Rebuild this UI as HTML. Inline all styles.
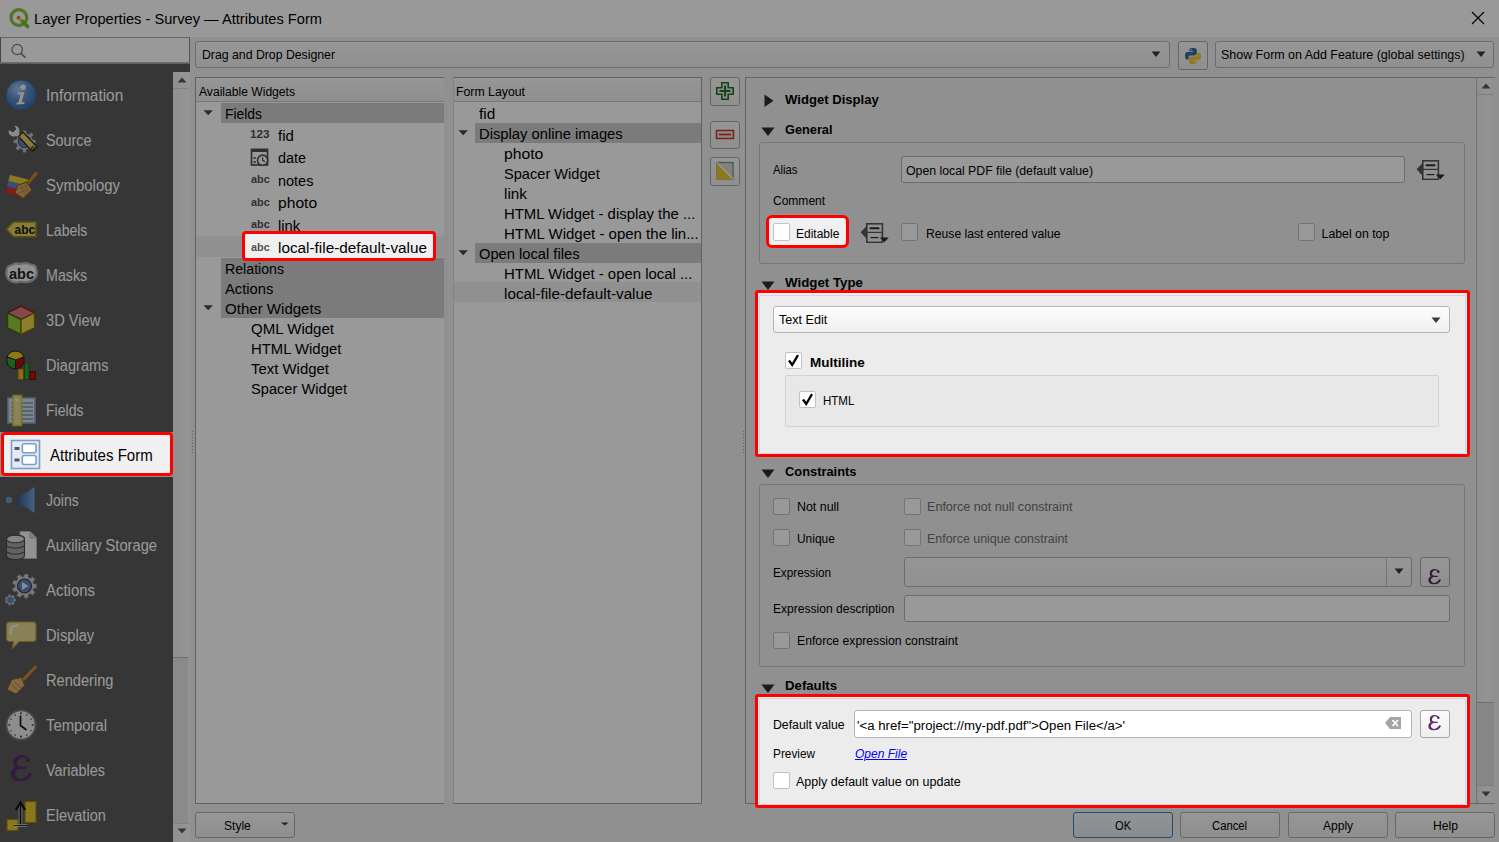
<!DOCTYPE html><html><head><meta charset="utf-8"><title>Layer Properties</title><style>
html,body{margin:0;padding:0;}
body{width:1499px;height:842px;overflow:hidden;position:relative;background:#f0f0f0;font-family:"Liberation Sans",sans-serif;}
.b{position:absolute;box-sizing:border-box;display:block;}
.t{position:absolute;white-space:pre;line-height:1;}
#ov{position:absolute;left:0;top:0;width:1499px;height:842px;background:rgba(0,0,0,0.4);z-index:50;}
</style></head><body>
<div class="b" style="left:0px;top:0px;width:1499px;height:37px;background:#fff;"></div>
<svg class="b" style="left:8px;top:7px;" width="22" height="22" viewBox="0 0 22 22"><circle cx="10.9" cy="10.6" r="7.9" fill="none" stroke="#8cc040" stroke-width="3.3"/><path d="M13.6 13.6 L19.6 19.6" stroke="#7ab83a" stroke-width="3.6" stroke-linecap="round"/><circle cx="10.6" cy="10.8" r="2" fill="#f07a20"/><path d="M11.5 11.8 L14 14.2" stroke="#f0d060" stroke-width="1.6"/></svg>
<div class="t" style="left:34.00px;top:12.00px;font-size:14.8px;color:#000;font-weight:400;transform:scaleX(0.9893);transform-origin:0 0;">Layer Properties - Survey — Attributes Form</div>
<svg class="b" style="left:1471px;top:11px;" width="14" height="14" viewBox="0 0 14 14"><path d="M1 1 L13 13 M13 1 L1 13" stroke="#000" stroke-width="1.1"/></svg>
<div class="b" style="left:0px;top:37px;width:190px;height:27px;background:#fff;border:1px solid #a8a8a8;border-left-color:#707070;border-right-color:#8a8a8a;"></div>
<div class="b" style="left:0px;top:62px;width:190px;height:2px;background:linear-gradient(#c8c8c8,#8c8c8c);"></div>
<svg class="b" style="left:9px;top:41px;" width="20" height="20" viewBox="0 0 20 20"><circle cx="8.2" cy="8.5" r="5.2" fill="none" stroke="#777" stroke-width="1.25"/><path d="M11.9 12.2 L16.4 16.6" stroke="#777" stroke-width="1.6"/></svg>
<div class="b" style="left:0px;top:64px;width:190px;height:778px;background:#5a5a5a;"></div>
<div class="b" style="left:173px;top:72px;width:17px;height:770px;background:linear-gradient(90deg,#f0f0f0,#f6f6f6 60%,#fafafa);"></div>
<svg class="b" style="left:176px;top:76px;" width="12" height="8" viewBox="0 0 12 8"><path d="M1.5 6.5 L6 1.5 L10.5 6.5 Z" fill="#5a5a5a"/></svg>
<div class="b" style="left:173px;top:88px;width:16px;height:1px;background:#d8d8d8;"></div>
<div class="b" style="left:173px;top:657px;width:16px;height:167px;background:#e6e6e6;border-top:1px solid #b8b8b8;border-bottom:1px solid #d8d8d8;border-right:1px solid #f4f4f4;"></div>
<svg class="b" style="left:176px;top:827px;" width="12" height="8" viewBox="0 0 12 8"><path d="M1.5 1.5 L6 6.5 L10.5 1.5 Z" fill="#5a5a5a"/></svg>
<svg class="b" style="left:5px;top:79px;" width="33" height="33" viewBox="0 0 33 33"><defs><radialGradient id="gi" cx="0.4" cy="0.3" r="0.75"><stop offset="0" stop-color="#a8c8f0"/><stop offset="0.5" stop-color="#5a8ac8"/><stop offset="1" stop-color="#3a6aa8"/></radialGradient></defs><circle cx="16" cy="16" r="15" fill="url(#gi)" stroke="#3a68a0" stroke-width="1"/><circle cx="18" cy="8.3" r="2.7" fill="#f2f2f2"/><path d="M12.8 13.6 L19.4 13 L16.8 23.2 L19.6 23 L19.2 25 L11.3 25.4 L11.8 23.4 L13.6 23.3 L15.4 15.5 L12.6 15.6 Z" fill="#f2f2f2"/></svg>
<div class="t" style="left:46.00px;top:88.00px;font-size:15.6px;color:#ffffff;font-weight:400;transform:scaleX(0.9908);transform-origin:0 0;">Information</div>
<svg class="b" style="left:5px;top:124px;" width="33" height="33" viewBox="0 0 33 33"><path d="M27.80 15.65 L30.85 15.67 L30.85 19.33 L27.80 19.35 L26.68 22.05 L28.82 24.23 L26.23 26.82 L24.05 24.68 L21.35 25.80 L21.33 28.85 L17.67 28.85 L17.65 25.80 L14.95 24.68 L12.77 26.82 L10.18 24.23 L12.32 22.05 L11.20 19.35 L8.15 19.33 L8.15 15.67 L11.20 15.65 L12.32 12.95 L10.18 10.77 L12.77 8.18 L14.95 10.32 L17.65 9.20 L17.67 6.15 L21.33 6.15 L21.35 9.20 L24.05 10.32 L26.23 8.18 L28.82 10.77 L26.68 12.95 Z" fill="#c4c4c4" stroke="#6a6a6a" stroke-width="1"/><circle cx="19.5" cy="17.5" r="6.2" fill="#5a86c0" stroke="#444" stroke-width="1"/><path d="M3 7.5 A6 6 0 0 0 11.5 12.5 L15 16 L18 13 L14.5 9.5 A6 6 0 0 0 8.5 1 L11 5 L8 8 L3.8 5.6 Z" fill="#e6e6e6" stroke="#555" stroke-width="0.9"/><path d="M13.5 12.5 L27.5 27.5 L32 23 L18 8 Z" fill="#e2ca6a" stroke="#2a2a10" stroke-width="1.2"/><circle cx="28" cy="24" r="1.4" fill="none" stroke="#2a2a10" stroke-width="1"/></svg>
<div class="t" style="left:46.00px;top:133.00px;font-size:15.6px;color:#ffffff;font-weight:400;transform:scaleX(0.9186);transform-origin:0 0;">Source</div>
<svg class="b" style="left:5px;top:169px;" width="33" height="33" viewBox="0 0 33 33"><path d="M5 6 L23 10.5 L17.5 29 L0.5 23.5 Z" fill="#d43030"/><path d="M5 6 L23 10.5 L19.5 22 L1.8 17 Z" fill="#5a86c8"/><path d="M5 6 L23 10.5 L21.2 16.5 L3.5 11.8 Z" fill="#e8cc30"/><path d="M31 4.5 L21.5 16" stroke="#c8862a" stroke-width="3.2" stroke-linecap="round"/><path d="M12.5 16.5 L21.5 13 L27 21 L18.5 29.5 L10 24 Z" fill="#d8aa6a" stroke="#8a5a20" stroke-width="1.1"/><path d="M12 20.5 L22.5 16.5 M13.5 24 L24.5 19.5 M16 16 L20.5 27.5 M19.5 14.5 L23.5 25" stroke="#a8783a" stroke-width="0.8"/></svg>
<div class="t" style="left:46.00px;top:178.00px;font-size:15.6px;color:#ffffff;font-weight:400;transform:scaleX(0.9593);transform-origin:0 0;">Symbology</div>
<svg class="b" style="left:5px;top:214px;" width="33" height="33" viewBox="0 0 33 33"><path d="M1.5 15.3 L8.5 8 L31 8 L31 22.8 L8.5 22.8 Z" fill="#e2d060" stroke="#9a8418" stroke-width="1.6"/><text x="19.8" y="19.8" font-family="Liberation Sans" font-weight="700" font-size="12" text-anchor="middle" fill="#161616">abc</text></svg>
<div class="t" style="left:46.00px;top:223.00px;font-size:15.6px;color:#ffffff;font-weight:400;transform:scaleX(0.9009);transform-origin:0 0;">Labels</div>
<svg class="b" style="left:5px;top:259px;" width="33" height="33" viewBox="0 0 33 33"><path d="M7 6 Q10 3.5 15 5 Q21 3 25.5 5.5 Q31.5 5.5 31.5 11.5 Q33 18 28 21 Q23 24.5 16 22.5 Q9 24.5 5 21.5 Q0.5 18.5 1.5 12.5 Q1.5 6.5 7 6 Z" fill="#f2f2f2" stroke="#b4b4b4" stroke-width="2.2"/><text x="16.5" y="19.5" font-family="Liberation Sans" font-weight="700" font-size="14.5" text-anchor="middle" fill="#222">abc</text></svg>
<div class="t" style="left:46.00px;top:268.00px;font-size:15.6px;color:#ffffff;font-weight:400;transform:scaleX(0.9143);transform-origin:0 0;">Masks</div>
<svg class="b" style="left:5px;top:304px;" width="33" height="33" viewBox="0 0 33 33"><path d="M16 2 L29.5 8.8 L16 15.5 L2.5 8.8 Z" fill="#e07878" stroke="#8a1f1f" stroke-width="1.4"/><path d="M2.5 8.8 L16 15.5 L16 30.5 L2.5 23.8 Z" fill="#96c83a" stroke="#3f6a10" stroke-width="1.4"/><path d="M29.5 8.8 L16 15.5 L16 30.5 L29.5 23.8 Z" fill="#e8d24a" stroke="#7a6a10" stroke-width="1.4"/></svg>
<div class="t" style="left:46.00px;top:313.00px;font-size:15.6px;color:#ffffff;font-weight:400;transform:scaleX(0.9378);transform-origin:0 0;">3D View</div>
<svg class="b" style="left:5px;top:349px;" width="33" height="33" viewBox="0 0 33 33"><circle cx="10.5" cy="11" r="8.8" fill="#b01010" stroke="#222" stroke-width="1"/><path d="M10.5 11 L2.2 8 A8.8 8.8 0 0 1 18.8 8 Z" fill="#f0c820" stroke="#222" stroke-width="1"/><path d="M10.5 11 L2.2 8 A8.8 8.8 0 0 0 10.5 19.8 Z" fill="#30a030" stroke="#222" stroke-width="1"/><rect x="13" y="20" width="5.5" height="10.5" fill="#f0b020" stroke="#8a6010" stroke-width="0.8"/><rect x="19.5" y="14" width="4.5" height="16.5" fill="#30a030" stroke="#1a5a1a" stroke-width="0.8"/><rect x="25" y="22.5" width="5.5" height="8" fill="#c01010" stroke="#5a0a0a" stroke-width="0.8"/></svg>
<div class="t" style="left:46.00px;top:358.00px;font-size:15.6px;color:#ffffff;font-weight:400;transform:scaleX(0.9365);transform-origin:0 0;">Diagrams</div>
<svg class="b" style="left:5px;top:394px;" width="33" height="33" viewBox="0 0 33 33"><rect x="3" y="4" width="27" height="25" fill="#cfdcec" stroke="#8aa4c4" stroke-width="1.6"/><path d="M6 9 H28 M6 13 H28 M6 17 H28 M6 21 H28 M6 25 H28" stroke="#7a94b4" stroke-width="1.3"/><rect x="8" y="1.5" width="8.5" height="30" fill="#e6dc96" stroke="#d0c040" stroke-width="1.6"/><rect x="10.5" y="5" width="2" height="2" fill="#fff"/></svg>
<div class="t" style="left:46.00px;top:403.00px;font-size:15.6px;color:#ffffff;font-weight:400;transform:scaleX(0.9036);transform-origin:0 0;">Fields</div>
<svg class="b" style="left:5px;top:484px;" width="33" height="33" viewBox="0 0 33 33"><circle cx="4" cy="16" r="3.2" fill="#6a9ac8"/><defs><linearGradient id="gj" x1="0" x2="1"><stop offset="0" stop-color="#2a5088"/><stop offset="1" stop-color="#7aa4d8"/></linearGradient></defs><path d="M9.5 16 L29.5 3 L29.5 29 Z" fill="url(#gj)"/></svg>
<div class="t" style="left:46.00px;top:493.00px;font-size:15.6px;color:#ffffff;font-weight:400;transform:scaleX(0.8982);transform-origin:0 0;">Joins</div>
<svg class="b" style="left:5px;top:529px;" width="33" height="33" viewBox="0 0 33 33"><path d="M15 2.5 L25 2.5 L31.5 9 L31.5 29.5 L15 29.5 Z" fill="#f4f4f4" stroke="#b4b4b4" stroke-width="1"/><path d="M25 2.5 L25 9 L31.5 9" fill="#d8d8d8" stroke="#b4b4b4" stroke-width="1"/><path d="M1.5 10 Q1.5 6 10.5 6 Q19.5 6 19.5 10 L19.5 26.5 Q19.5 30.5 10.5 30.5 Q1.5 30.5 1.5 26.5 Z" fill="#a4a4a4" stroke="#4a4a4a" stroke-width="1.1"/><ellipse cx="10.5" cy="10" rx="9" ry="3.8" fill="#dcdcdc" stroke="#4a4a4a" stroke-width="1.1"/><path d="M1.5 17 Q10.5 21.5 19.5 17 M1.5 23 Q10.5 27.5 19.5 23" fill="none" stroke="#4a4a4a" stroke-width="1.1"/></svg>
<div class="t" style="left:46.00px;top:538.00px;font-size:15.6px;color:#ffffff;font-weight:400;transform:scaleX(0.9417);transform-origin:0 0;">Auxiliary Storage</div>
<svg class="b" style="left:5px;top:574px;" width="33" height="33" viewBox="0 0 33 33"><path d="M28.68 9.54 L31.85 10.04 L31.85 13.96 L28.68 14.46 L28.11 16.01 L30.21 18.44 L27.70 21.43 L24.95 19.78 L23.51 20.61 L23.57 23.82 L19.72 24.50 L18.67 21.46 L17.04 21.18 L15.02 23.67 L11.63 21.71 L12.78 18.72 L11.72 17.45 L8.57 18.06 L7.23 14.39 L10.04 12.83 L10.04 11.17 L7.23 9.61 L8.57 5.94 L11.72 6.55 L12.78 5.28 L11.63 2.29 L15.02 0.33 L17.04 2.82 L18.67 2.54 L19.72 -0.50 L23.57 0.18 L23.51 3.39 L24.95 4.22 L27.70 2.57 L30.21 5.56 L28.11 7.99 Z" fill="#c8c8c8" stroke="#707070" stroke-width="0.8"/><circle cx="19.5" cy="12" r="7" fill="#5a86c0" stroke="#3a3a3a" stroke-width="1.1"/><path d="M17 8 L23.5 12 L17 16 Z" fill="#e8e8e8"/><path d="M9.46 24.61 L10.99 24.88 L10.99 27.12 L9.46 27.39 L9.06 28.23 L9.80 29.59 L8.04 30.99 L6.89 29.96 L5.97 30.17 L5.37 31.60 L3.18 31.10 L3.27 29.56 L2.53 28.97 L1.04 29.39 L0.07 27.37 L1.33 26.47 L1.33 25.53 L0.07 24.63 L1.04 22.61 L2.53 23.03 L3.27 22.44 L3.18 20.90 L5.37 20.40 L5.97 21.83 L6.89 22.04 L8.04 21.01 L9.80 22.41 L9.06 23.77 Z" fill="#c8c8c8" stroke="#707070" stroke-width="0.6"/><circle cx="5.5" cy="26" r="3.3" fill="#5a86c0"/></svg>
<div class="t" style="left:46.00px;top:583.00px;font-size:15.6px;color:#ffffff;font-weight:400;transform:scaleX(0.9581);transform-origin:0 0;">Actions</div>
<svg class="b" style="left:5px;top:619px;" width="33" height="33" viewBox="0 0 33 33"><path d="M5 3 L28 3 Q31 3 31 6.5 L31 19 Q31 22.5 28 22.5 L14 22.5 L7.5 29.5 L8.5 22.5 L5 22.5 Q1.5 22.5 1.5 19 L1.5 6.5 Q1.5 3 5 3 Z" fill="#e4d890" stroke="#aa9c44" stroke-width="1.2"/><path d="M5.5 14 Q5.5 6.5 12.5 6.5" stroke="#faf6dc" stroke-width="2.2" fill="none" stroke-linecap="round"/></svg>
<div class="t" style="left:46.00px;top:628.00px;font-size:15.6px;color:#ffffff;font-weight:400;transform:scaleX(0.9425);transform-origin:0 0;">Display</div>
<svg class="b" style="left:5px;top:664px;" width="33" height="33" viewBox="0 0 33 33"><path d="M30.5 3 L17 17" stroke="#d08a30" stroke-width="3.2" stroke-linecap="round"/><path d="M7 15.5 L16.5 13.5 L19.5 21.5 L11 30 L2 25.5 Z" fill="#deb070" stroke="#8a5a20" stroke-width="1"/><path d="M6 20 L14 27.5 M9 17.5 L16.5 24.5" stroke="#a0703a" stroke-width="0.9"/></svg>
<div class="t" style="left:46.00px;top:673.00px;font-size:15.6px;color:#ffffff;font-weight:400;transform:scaleX(0.9379);transform-origin:0 0;">Rendering</div>
<svg class="b" style="left:5px;top:709px;" width="33" height="33" viewBox="0 0 33 33"><circle cx="16" cy="16" r="14.6" fill="#ececec" stroke="#7a7a7a" stroke-width="1.9"/><g fill="#3a5a8a"><circle cx="16" cy="4.3" r="1.1"/><circle cx="16" cy="27.7" r="1.1"/><circle cx="4.3" cy="16" r="1.1"/><circle cx="27.7" cy="16" r="1.1"/><circle cx="21.8" cy="5.9" r="0.8"/><circle cx="26.1" cy="10.2" r="0.8"/><circle cx="26.1" cy="21.8" r="0.8"/><circle cx="21.8" cy="26.1" r="0.8"/><circle cx="10.2" cy="26.1" r="0.8"/><circle cx="5.9" cy="21.8" r="0.8"/><circle cx="5.9" cy="10.2" r="0.8"/><circle cx="10.2" cy="5.9" r="0.8"/></g><path d="M15.5 6.5 L15.5 16.5 L21.5 21" stroke="#1a1a1a" stroke-width="1.7" fill="none"/></svg>
<div class="t" style="left:46.00px;top:718.00px;font-size:15.6px;color:#ffffff;font-weight:400;transform:scaleX(0.9510);transform-origin:0 0;">Temporal</div>
<svg class="b" style="left:4.7px;top:750.2px;" width="35" height="35" viewBox="0 0 35 35"><g transform="scale(1.7)"><g fill="none" stroke="#5a2a6a" stroke-linecap="round"><path d="M13.6 6 C12.8 4.2 11 3.6 9.5 3.7 C7 3.9 5.3 5.6 5.4 7.6 C5.5 9.3 6.8 10.3 8.5 10.4" stroke-width="1.25"/><path d="M7.8 4.5 C5.9 5.6 5.4 8.2 6.9 9.6" stroke-width="1.8"/><path d="M8 10.4 L12.3 10.4" stroke-width="1.15"/><path d="M8.5 10.4 C5.8 10.7 3.9 12.4 4 14.5 C4.1 16.6 6.3 17.7 9 17.7 C11.5 17.7 13.4 16.4 14.7 14.4" stroke-width="1.25"/><path d="M6.6 11.1 C4.3 12.3 4 15.8 6.8 17" stroke-width="2.0"/><path d="M12.4 16.7 C13.4 16 14.2 15.2 14.8 14.3" stroke-width="1.9"/></g><circle cx="13.3" cy="5.8" r="1.25" fill="#5a2a6a"/></g></svg>
<div class="t" style="left:46.00px;top:763.00px;font-size:15.6px;color:#ffffff;font-weight:400;transform:scaleX(0.9239);transform-origin:0 0;">Variables</div>
<svg class="b" style="left:5px;top:799px;" width="33" height="33" viewBox="0 0 33 33"><rect x="20" y="2.5" width="11" height="21" fill="#e6c830" stroke="#9a8010" stroke-width="1.2"/><rect x="2" y="20.5" width="11" height="11" fill="#e6c830" stroke="#9a8010" stroke-width="1.2"/><path d="M9 26.5 L22 26.5" stroke="#ddd" stroke-width="2.4"/><path d="M8.5 26.5 L22 26.5" stroke="#1a1a1a" stroke-width="0.9"/><path d="M15.5 25 L15.5 6" stroke="#ccc" stroke-width="3.6"/><path d="M15.5 25 L15.5 6" stroke="#111" stroke-width="1.8"/><path d="M10.8 11 L15.5 3.5 L20.2 11" stroke="#111" stroke-width="2.2" fill="none"/></svg>
<div class="t" style="left:46.00px;top:808.00px;font-size:15.6px;color:#ffffff;font-weight:400;transform:scaleX(0.9321);transform-origin:0 0;">Elevation</div>
<div class="b" style="left:0px;top:432px;width:173px;height:45px;background:#f0f0f0;"></div>
<div class="b" style="left:195px;top:41px;width:975px;height:27px;background:linear-gradient(#fbfbfb,#f0f0f0);border:1px solid #b4b4b4;border-radius:3px;"></div>
<div class="t" style="left:201.60px;top:49.00px;font-size:12.3px;color:#000;font-weight:400;transform:scaleX(0.9978);transform-origin:0 0;">Drag and Drop Designer</div>
<svg class="b" style="left:1151px;top:51px;" width="10" height="7" viewBox="0 0 10 7"><path d="M0.5 0.5 L9.5 0.5 L5 6 Z" fill="#3a3a3a"/></svg>
<div class="b" style="left:1178px;top:41px;width:30px;height:29px;background:linear-gradient(#fbfbfb,#eeeeee);border:1px solid #a8a8a8;border-radius:3px;"></div>
<svg class="b" style="left:1183px;top:46px;" width="20" height="20" viewBox="0 0 20 20"><path d="M9.8 2 C6 2 6.2 3.6 6.2 3.6 L6.2 5.3 L10 5.3 L10 5.9 L4.6 5.9 C4.6 5.9 2 5.6 2 9.7 C2 13.8 4.3 13.6 4.3 13.6 L5.6 13.6 L5.6 11.7 C5.6 11.7 5.5 9.4 7.8 9.4 L11.6 9.4 C11.6 9.4 13.8 9.5 13.8 7.3 L13.8 3.8 C13.8 3.8 14.1 2 9.8 2 Z" fill="#3a6ea5"/><path d="M10.2 18 C14 18 13.8 16.4 13.8 16.4 L13.8 14.7 L10 14.7 L10 14.1 L15.4 14.1 C15.4 14.1 18 14.4 18 10.3 C18 6.2 15.7 6.4 15.7 6.4 L14.4 6.4 L14.4 8.3 C14.4 8.3 14.5 10.6 12.2 10.6 L8.4 10.6 C8.4 10.6 6.2 10.5 6.2 12.7 L6.2 16.2 C6.2 16.2 5.9 18 10.2 18 Z" fill="#f2c83a"/><circle cx="8" cy="3.7" r="0.7" fill="#fff"/><circle cx="12" cy="16.3" r="0.7" fill="#fff"/></svg>
<div class="b" style="left:1215px;top:41px;width:279px;height:27px;background:linear-gradient(#fbfbfb,#f0f0f0);border:1px solid #b4b4b4;border-radius:3px;"></div>
<div class="t" style="left:1221.10px;top:49.00px;font-size:12.3px;color:#000;font-weight:400;transform:scaleX(1.0125);transform-origin:0 0;">Show Form on Add Feature (global settings)</div>
<svg class="b" style="left:1476px;top:51px;" width="10" height="7" viewBox="0 0 10 7"><path d="M0.5 0.5 L9.5 0.5 L5 6 Z" fill="#3a3a3a"/></svg>
<div class="b" style="left:195px;top:77px;width:249px;height:727px;background:#fff;border:1px solid #a4a4a4;border-right:none;"></div>
<div class="b" style="left:196px;top:78px;width:248px;height:24px;background:linear-gradient(#fafafa,#eeeeee);border-bottom:1px solid #c8c8c8;"></div>
<div class="t" style="left:199.00px;top:86.00px;font-size:12.3px;color:#000;font-weight:400;transform:scaleX(0.9843);transform-origin:0 0;">Available Widgets</div>
<div class="b" style="left:221px;top:103px;width:223px;height:20px;background:#cdcdcd;"></div>
<svg class="b" style="left:203.3px;top:110px;" width="11" height="6" viewBox="0 0 11 6"><path d="M0.5 0.3 L9.9 0.3 L5.2 5.3 Z" fill="#4a4a4a"/></svg>
<div class="t" style="left:225.00px;top:107.00px;font-size:14.9px;color:#000;font-weight:400;transform:scaleX(0.9312);transform-origin:0 0;">Fields</div>
<div class="t" style="left:250.30px;top:129.00px;font-size:10.6px;color:#505050;font-weight:700;transform:scaleX(1.1081);transform-origin:0 0;">123</div>
<div class="t" style="left:278.20px;top:129.00px;font-size:14.9px;color:#000;font-weight:400;transform:scaleX(1.0042);transform-origin:0 0;">fid</div>
<svg class="b" style="left:250px;top:147px;" width="20" height="20" viewBox="0 0 20 20"><rect x="1.5" y="2.5" width="16" height="15.5" fill="none" stroke="#505050" stroke-width="1.7"/><rect x="1.5" y="1.8" width="16" height="3.2" fill="#505050"/><circle cx="12.6" cy="13.2" r="5.1" fill="#fff" stroke="#505050" stroke-width="1.6"/><path d="M12.6 10.2 L12.6 13.3 L15 14.6" stroke="#505050" stroke-width="1.2" fill="none"/><rect x="3.6" y="10" width="2" height="2" fill="#505050"/><rect x="3.6" y="14" width="2" height="2" fill="#505050"/></svg>
<div class="t" style="left:278.20px;top:151.00px;font-size:14.9px;color:#000;font-weight:400;transform:scaleX(0.9660);transform-origin:0 0;">date</div>
<div class="t" style="left:250.80px;top:174.00px;font-size:10.6px;color:#505050;font-weight:700;transform:scaleX(1.0238);transform-origin:0 0;">abc</div>
<div class="t" style="left:278.20px;top:174.00px;font-size:14.9px;color:#000;font-weight:400;transform:scaleX(0.9715);transform-origin:0 0;">notes</div>
<div class="t" style="left:250.80px;top:197.00px;font-size:10.6px;color:#505050;font-weight:700;transform:scaleX(1.0238);transform-origin:0 0;">abc</div>
<div class="t" style="left:278.20px;top:196.00px;font-size:14.9px;color:#000;font-weight:400;transform:scaleX(1.0492);transform-origin:0 0;">photo</div>
<div class="t" style="left:250.80px;top:219.00px;font-size:10.6px;color:#505050;font-weight:700;transform:scaleX(1.0238);transform-origin:0 0;">abc</div>
<div class="t" style="left:278.20px;top:219.00px;font-size:14.9px;color:#000;font-weight:400;transform:scaleX(0.9980);transform-origin:0 0;">link</div>
<div class="b" style="left:196px;top:236px;width:248px;height:21px;background:#f0f0f0;"></div>
<div class="b" style="left:221px;top:258px;width:223px;height:60px;background:#cdcdcd;"></div>
<div class="t" style="left:225.00px;top:262.00px;font-size:14.9px;color:#000;font-weight:400;transform:scaleX(0.9518);transform-origin:0 0;">Relations</div>
<div class="t" style="left:225.00px;top:282.00px;font-size:14.9px;color:#000;font-weight:400;transform:scaleX(0.9889);transform-origin:0 0;">Actions</div>
<svg class="b" style="left:203.3px;top:305px;" width="11" height="6" viewBox="0 0 11 6"><path d="M0.5 0.3 L9.9 0.3 L5.2 5.3 Z" fill="#4a4a4a"/></svg>
<div class="t" style="left:225.00px;top:302.00px;font-size:14.9px;color:#000;font-weight:400;transform:scaleX(1.0108);transform-origin:0 0;">Other Widgets</div>
<div class="t" style="left:250.50px;top:322.00px;font-size:14.9px;color:#000;font-weight:400;transform:scaleX(1.0097);transform-origin:0 0;">QML Widget</div>
<div class="t" style="left:250.50px;top:342.00px;font-size:14.9px;color:#000;font-weight:400;transform:scaleX(0.9981);transform-origin:0 0;">HTML Widget</div>
<div class="t" style="left:250.50px;top:362.00px;font-size:14.9px;color:#000;font-weight:400;transform:scaleX(1.0026);transform-origin:0 0;">Text Widget</div>
<div class="t" style="left:250.50px;top:382.00px;font-size:14.9px;color:#000;font-weight:400;transform:scaleX(0.9829);transform-origin:0 0;">Spacer Widget</div>
<div class="b" style="left:192px;top:431px;width:1px;height:1px;background:#a8a8a8;"></div>
<div class="b" style="left:192px;top:434px;width:1px;height:1px;background:#a8a8a8;"></div>
<div class="b" style="left:192px;top:437px;width:1px;height:1px;background:#a8a8a8;"></div>
<div class="b" style="left:192px;top:440px;width:1px;height:1px;background:#a8a8a8;"></div>
<div class="b" style="left:192px;top:443px;width:1px;height:1px;background:#a8a8a8;"></div>
<div class="b" style="left:192px;top:446px;width:1px;height:1px;background:#a8a8a8;"></div>
<div class="b" style="left:192px;top:449px;width:1px;height:1px;background:#a8a8a8;"></div>
<div class="b" style="left:192px;top:452px;width:1px;height:1px;background:#a8a8a8;"></div>
<div class="b" style="left:453px;top:77px;width:249px;height:727px;background:#fff;border:1px solid #a4a4a4;border-left-color:#dadada;"></div>
<div class="b" style="left:454px;top:78px;width:247px;height:24px;background:linear-gradient(#fafafa,#eeeeee);border-bottom:1px solid #c8c8c8;"></div>
<div class="t" style="left:456.40px;top:86.00px;font-size:12.3px;color:#000;font-weight:400;transform:scaleX(0.9995);transform-origin:0 0;">Form Layout</div>
<div class="t" style="left:478.60px;top:107.00px;font-size:14.9px;color:#000;font-weight:400;transform:scaleX(1.0359);transform-origin:0 0;">fid</div>
<div class="b" style="left:475px;top:123px;width:226px;height:20px;background:#cdcdcd;"></div>
<svg class="b" style="left:457.6px;top:130px;" width="11" height="6" viewBox="0 0 11 6"><path d="M0.5 0.3 L9.9 0.3 L5.2 5.3 Z" fill="#4a4a4a"/></svg>
<div class="t" style="left:479.00px;top:127.00px;font-size:14.9px;color:#000;font-weight:400;transform:scaleX(0.9921);transform-origin:0 0;">Display online images</div>
<div class="t" style="left:504.00px;top:147.00px;font-size:14.9px;color:#000;font-weight:400;transform:scaleX(1.0546);transform-origin:0 0;">photo</div>
<div class="t" style="left:504.00px;top:167.00px;font-size:14.9px;color:#000;font-weight:400;transform:scaleX(0.9808);transform-origin:0 0;">Spacer Widget</div>
<div class="t" style="left:504.00px;top:187.00px;font-size:14.9px;color:#000;font-weight:400;transform:scaleX(1.0204);transform-origin:0 0;">link</div>
<div class="t" style="left:504.00px;top:207.00px;font-size:14.9px;color:#000;font-weight:400;transform:scaleX(0.9993);transform-origin:0 0;">HTML Widget - display the ...</div>
<div class="t" style="left:504.00px;top:227.00px;font-size:14.9px;color:#000;font-weight:400;transform:scaleX(1.0082);transform-origin:0 0;">HTML Widget - open the lin...</div>
<div class="b" style="left:475px;top:243px;width:226px;height:20px;background:#cdcdcd;"></div>
<svg class="b" style="left:457.6px;top:250px;" width="11" height="6" viewBox="0 0 11 6"><path d="M0.5 0.3 L9.9 0.3 L5.2 5.3 Z" fill="#4a4a4a"/></svg>
<div class="t" style="left:479.00px;top:247.00px;font-size:14.9px;color:#000;font-weight:400;transform:scaleX(0.9871);transform-origin:0 0;">Open local files</div>
<div class="t" style="left:504.00px;top:267.00px;font-size:14.9px;color:#000;font-weight:400;transform:scaleX(1.0014);transform-origin:0 0;">HTML Widget - open local ...</div>
<div class="b" style="left:454px;top:282px;width:247px;height:20px;background:#f0f0f0;"></div>
<div class="t" style="left:504.00px;top:287.00px;font-size:14.9px;color:#000;font-weight:400;transform:scaleX(1.0252);transform-origin:0 0;">local-file-default-value</div>
<div class="b" style="left:710px;top:77px;width:30px;height:29px;background:linear-gradient(#fbfbfb,#eeeeee);border:1px solid #a8a8a8;border-radius:3px;"></div>
<svg class="b" style="left:715px;top:81px;" width="20" height="20" viewBox="0 0 20 20"><path d="M6.8 1.8 H13.2 V6.8 H18.2 V13.2 H13.2 V18.2 H6.8 V13.2 H1.8 V6.8 H6.8 Z" fill="#e6f0e6" stroke="#2a6a2a" stroke-width="1.6"/><path d="M10 4.5 V15.5 M4.5 10 H15.5" stroke="#2a6a2a" stroke-width="2"/></svg>
<div class="b" style="left:710px;top:121px;width:30px;height:28px;background:linear-gradient(#fbfbfb,#eeeeee);border:1px solid #a8a8a8;border-radius:3px;"></div>
<svg class="b" style="left:715px;top:129px;" width="20" height="12" viewBox="0 0 20 12"><rect x="1.5" y="1.5" width="17" height="8" fill="#f4e0e0" stroke="#c83232" stroke-width="1.5"/><path d="M4 5.5 H16" stroke="#c83232" stroke-width="1.7"/></svg>
<div class="b" style="left:710px;top:157px;width:30px;height:29px;background:linear-gradient(#fbfbfb,#eeeeee);border:1px solid #a8a8a8;border-radius:3px;"></div>
<svg class="b" style="left:715px;top:160px;" width="20" height="21" viewBox="0 0 20 21"><rect x="2" y="2.5" width="16" height="16.5" fill="#d8d8d8" stroke="#8a8a8a" stroke-width="1.3"/><path d="M1.5 2 L18.5 19.5 L1.5 19.5 Z" fill="#e6cc30"/><path d="M2 2.5 L18 19" stroke="#fff" stroke-width="1.2"/></svg>
<div class="b" style="left:743px;top:431px;width:1px;height:1px;background:#a8a8a8;"></div>
<div class="b" style="left:743px;top:434px;width:1px;height:1px;background:#a8a8a8;"></div>
<div class="b" style="left:743px;top:437px;width:1px;height:1px;background:#a8a8a8;"></div>
<div class="b" style="left:743px;top:440px;width:1px;height:1px;background:#a8a8a8;"></div>
<div class="b" style="left:743px;top:443px;width:1px;height:1px;background:#a8a8a8;"></div>
<div class="b" style="left:743px;top:446px;width:1px;height:1px;background:#a8a8a8;"></div>
<div class="b" style="left:743px;top:449px;width:1px;height:1px;background:#a8a8a8;"></div>
<div class="b" style="left:743px;top:452px;width:1px;height:1px;background:#a8a8a8;"></div>
<div class="b" style="left:745px;top:77px;width:750px;height:727px;border:1px solid #ababab;border-right:none;"></div>
<div class="b" style="left:1476px;top:78px;width:18px;height:725px;background:linear-gradient(90deg,#ececec,#f6f6f6 50%,#f0f0f0);border-left:1px solid #c0c0c0;"></div>
<svg class="b" style="left:1480px;top:82px;" width="12" height="8" viewBox="0 0 12 8"><path d="M1.5 6.5 L6 1.5 L10.5 6.5 Z" fill="#5a5a5a"/></svg>
<div class="b" style="left:1477px;top:94px;width:17px;height:1px;background:#d0d0d0;"></div>
<div class="b" style="left:1477px;top:702px;width:17px;height:84px;background:#e2e2e2;border-top:1px solid #b8b8b8;border-bottom:1px solid #d0d0d0;"></div>
<svg class="b" style="left:1480px;top:790px;" width="12" height="8" viewBox="0 0 12 8"><path d="M1.5 1.5 L6 6.5 L10.5 1.5 Z" fill="#5a5a5a"/></svg>
<svg class="b" style="left:763.5px;top:93.5px;" width="12" height="14" viewBox="0 0 12 14"><path d="M0.5 0.5 L9.5 6.8 L0.5 13 Z" fill="#2e2e2e"/></svg>
<div class="t" style="left:785.00px;top:93.00px;font-size:13.3px;color:#000;font-weight:700;transform:scaleX(0.9853);transform-origin:0 0;">Widget Display</div>
<svg class="b" style="left:760.5px;top:126.5px;" width="14" height="10" viewBox="0 0 14 10"><path d="M0.5 0.5 L13.5 0.5 L7 9 Z" fill="#2e2e2e"/></svg>
<div class="t" style="left:785.00px;top:123.00px;font-size:13.3px;color:#000;font-weight:700;transform:scaleX(0.9590);transform-origin:0 0;">General</div>
<div class="b" style="left:759px;top:142px;width:706px;height:122px;border:1px solid #c6c6c6;border-radius:3px;"></div>
<div class="t" style="left:773.20px;top:164.00px;font-size:12.3px;color:#000;font-weight:400;transform:scaleX(0.9116);transform-origin:0 0;">Alias</div>
<div class="b" style="left:901px;top:156px;width:504px;height:27px;background:#fff;border:1px solid #b4b4b4;border-radius:3px;"></div>
<div class="t" style="left:905.60px;top:165.00px;font-size:12.3px;color:#000;font-weight:400;transform:scaleX(0.9985);transform-origin:0 0;">Open local PDF file (default value)</div>
<svg class="b" style="left:1416px;top:160px;" width="29" height="20" viewBox="0 0 29 20"><path d="M6.5 3 L0.6 9.2 L6.5 15.8 Z" fill="#585858"/><rect x="6.8" y="0.8" width="15.6" height="18.6" fill="#f2f2f2" stroke="#585858" stroke-width="1.6"/><path d="M6.8 9.4 H22.4" stroke="#585858" stroke-width="1.2"/><path d="M10.5 5.2 H18.5" stroke="#2e2e2e" stroke-width="2.1" stroke-linecap="round"/><path d="M10.5 14.6 H18.5" stroke="#2e2e2e" stroke-width="1.2"/><path d="M19.8 14.4 L28.8 14.4 L24.3 19.2 Z" fill="#2e2e2e"/></svg>
<div class="t" style="left:773.20px;top:195.00px;font-size:12.3px;color:#000;font-weight:400;transform:scaleX(0.9773);transform-origin:0 0;">Comment</div>
<svg class="b" style="left:860px;top:223px;" width="29" height="20" viewBox="0 0 29 20"><path d="M6.5 3 L0.6 9.2 L6.5 15.8 Z" fill="#585858"/><rect x="6.8" y="0.8" width="15.6" height="18.6" fill="#f2f2f2" stroke="#585858" stroke-width="1.6"/><path d="M6.8 9.4 H22.4" stroke="#585858" stroke-width="1.2"/><path d="M10.5 5.2 H18.5" stroke="#2e2e2e" stroke-width="2.1" stroke-linecap="round"/><path d="M10.5 14.6 H18.5" stroke="#2e2e2e" stroke-width="1.2"/><path d="M19.8 14.4 L28.8 14.4 L24.3 19.2 Z" fill="#2e2e2e"/></svg>
<div class="b" style="left:901px;top:223px;width:17px;height:18px;background:#fff;border:1px solid #c2c2c2;border-radius:2px;"></div>
<div class="t" style="left:925.50px;top:228.00px;font-size:12.3px;color:#000;font-weight:400;transform:scaleX(0.9886);transform-origin:0 0;">Reuse last entered value</div>
<div class="b" style="left:1298px;top:223px;width:17px;height:18px;background:#fff;border:1px solid #c2c2c2;border-radius:2px;"></div>
<div class="t" style="left:1321.60px;top:228.00px;font-size:12.3px;color:#000;font-weight:400;transform:scaleX(1.0000);transform-origin:0 0;">Label on top</div>
<svg class="b" style="left:760.5px;top:280.5px;" width="14" height="10" viewBox="0 0 14 10"><path d="M0.5 0.5 L13.5 0.5 L7 9 Z" fill="#2e2e2e"/></svg>
<div class="t" style="left:785.00px;top:276.00px;font-size:13.3px;color:#000;font-weight:700;transform:scaleX(1.0008);transform-origin:0 0;">Widget Type</div>
<svg class="b" style="left:760.5px;top:468.5px;" width="14" height="10" viewBox="0 0 14 10"><path d="M0.5 0.5 L13.5 0.5 L7 9 Z" fill="#2e2e2e"/></svg>
<div class="t" style="left:785.00px;top:465.00px;font-size:13.3px;color:#000;font-weight:700;transform:scaleX(0.9676);transform-origin:0 0;">Constraints</div>
<div class="b" style="left:759px;top:484px;width:706px;height:183px;border:1px solid #c6c6c6;border-radius:3px;"></div>
<div class="b" style="left:773px;top:498px;width:17px;height:17px;background:#fff;border:1px solid #c2c2c2;border-radius:2px;"></div>
<div class="t" style="left:796.60px;top:501.00px;font-size:12.3px;color:#000;font-weight:400;transform:scaleX(1.0095);transform-origin:0 0;">Not null</div>
<div class="b" style="left:904px;top:498px;width:17px;height:17px;background:#fff;border:1px solid #c2c2c2;border-radius:2px;"></div>
<div class="t" style="left:927.30px;top:501.00px;font-size:12.3px;color:#6e6e6e;font-weight:400;transform:scaleX(1.0226);transform-origin:0 0;">Enforce not null constraint</div>
<div class="b" style="left:773px;top:529px;width:17px;height:17px;background:#fff;border:1px solid #c2c2c2;border-radius:2px;"></div>
<div class="t" style="left:796.60px;top:533.00px;font-size:12.3px;color:#000;font-weight:400;transform:scaleX(0.9700);transform-origin:0 0;">Unique</div>
<div class="b" style="left:904px;top:529px;width:17px;height:17px;background:#fff;border:1px solid #c2c2c2;border-radius:2px;"></div>
<div class="t" style="left:927.30px;top:533.00px;font-size:12.3px;color:#6e6e6e;font-weight:400;transform:scaleX(1.0097);transform-origin:0 0;">Enforce unique constraint</div>
<div class="t" style="left:773.20px;top:567.00px;font-size:12.3px;color:#000;font-weight:400;transform:scaleX(0.9549);transform-origin:0 0;">Expression</div>
<div class="b" style="left:904px;top:557px;width:508px;height:30px;background:linear-gradient(#fafafa,#f2f2f2);border:1px solid #b4b4b4;border-radius:3px;"></div>
<div class="b" style="left:1386px;top:558px;width:1px;height:28px;background:#c4c4c4;"></div>
<svg class="b" style="left:1394px;top:568px;" width="10" height="7" viewBox="0 0 10 7"><path d="M0.5 0.5 L9.5 0.5 L5 6 Z" fill="#3a3a3a"/></svg>
<div class="b" style="left:1420px;top:557px;width:30px;height:30px;background:linear-gradient(#fbfbfb,#eeeeee);border:1px solid #a8a8a8;border-radius:3px;"></div>
<svg class="b" style="left:1425px;top:566px;" width="21" height="21" viewBox="0 0 21 21"><g transform="scale(1.0)"><g fill="none" stroke="#5a2a6a" stroke-linecap="round"><path d="M13.6 6 C12.8 4.2 11 3.6 9.5 3.7 C7 3.9 5.3 5.6 5.4 7.6 C5.5 9.3 6.8 10.3 8.5 10.4" stroke-width="1.25"/><path d="M7.8 4.5 C5.9 5.6 5.4 8.2 6.9 9.6" stroke-width="1.8"/><path d="M8 10.4 L12.3 10.4" stroke-width="1.15"/><path d="M8.5 10.4 C5.8 10.7 3.9 12.4 4 14.5 C4.1 16.6 6.3 17.7 9 17.7 C11.5 17.7 13.4 16.4 14.7 14.4" stroke-width="1.25"/><path d="M6.6 11.1 C4.3 12.3 4 15.8 6.8 17" stroke-width="2.0"/><path d="M12.4 16.7 C13.4 16 14.2 15.2 14.8 14.3" stroke-width="1.9"/></g><circle cx="13.3" cy="5.8" r="1.25" fill="#5a2a6a"/></g></svg>
<div class="t" style="left:773.20px;top:603.00px;font-size:12.3px;color:#000;font-weight:400;transform:scaleX(0.9813);transform-origin:0 0;">Expression description</div>
<div class="b" style="left:904px;top:595px;width:546px;height:27px;background:#fff;border:1px solid #b4b4b4;border-radius:3px;"></div>
<div class="b" style="left:773px;top:632px;width:17px;height:17px;background:#fff;border:1px solid #c2c2c2;border-radius:2px;"></div>
<div class="t" style="left:796.60px;top:635.00px;font-size:12.3px;color:#000;font-weight:400;transform:scaleX(0.9938);transform-origin:0 0;">Enforce expression constraint</div>
<svg class="b" style="left:760.5px;top:683.5px;" width="14" height="10" viewBox="0 0 14 10"><path d="M0.5 0.5 L13.5 0.5 L7 9 Z" fill="#2e2e2e"/></svg>
<div class="t" style="left:785.00px;top:679.00px;font-size:13.3px;color:#000;font-weight:700;transform:scaleX(0.9930);transform-origin:0 0;">Defaults</div>
<div class="b" style="left:195px;top:812px;width:100px;height:26px;background:linear-gradient(#fbfbfb,#eeeeee);border:1px solid #adadad;border-radius:3px;"></div>
<div class="t" style="left:224.00px;top:820.00px;font-size:12.3px;color:#000;font-weight:400;transform:scaleX(0.9801);transform-origin:0 0;">Style</div>
<svg class="b" style="left:280px;top:822px;" width="10" height="5" viewBox="0 0 10 5"><path d="M1 0.5 L8.5 0.5 L4.75 3.5 Z" fill="#3a3a3a"/></svg>
<div class="b" style="left:1073px;top:812px;width:100px;height:26px;background:linear-gradient(#f2f6fa,#e2eaf2);border:1px solid #3c7fc4;border-radius:3px;"></div>
<div class="t" style="left:1114.80px;top:820.00px;font-size:12.3px;color:#000;font-weight:400;transform:scaleX(0.9054);transform-origin:0 0;">OK</div>
<div class="b" style="left:1180px;top:812px;width:100px;height:26px;background:linear-gradient(#fbfbfb,#eeeeee);border:1px solid #adadad;border-radius:3px;"></div>
<div class="t" style="left:1212.30px;top:820.00px;font-size:12.3px;color:#000;font-weight:400;transform:scaleX(0.9169);transform-origin:0 0;">Cancel</div>
<div class="b" style="left:1288px;top:812px;width:100px;height:26px;background:linear-gradient(#fbfbfb,#eeeeee);border:1px solid #adadad;border-radius:3px;"></div>
<div class="t" style="left:1322.70px;top:820.00px;font-size:12.3px;color:#000;font-weight:400;transform:scaleX(0.9784);transform-origin:0 0;">Apply</div>
<div class="b" style="left:1395px;top:812px;width:100px;height:26px;background:linear-gradient(#fbfbfb,#eeeeee);border:1px solid #adadad;border-radius:3px;"></div>
<div class="t" style="left:1432.50px;top:820.00px;font-size:12.3px;color:#000;font-weight:400;transform:scaleX(0.9843);transform-origin:0 0;">Help</div>
<div id="ov"></div>
<div class="b" style="left:1px;top:432px;width:172px;height:44px;z-index:60;border:3px solid #ff0000;background:#f0f0f0;border-radius:4px;"></div>
<svg class="b" style="left:10px;top:439px;z-index:61;" width="31" height="31" viewBox="0 0 31 31"><rect x="1.5" y="1.5" width="28" height="28" fill="#e4ebf4" stroke="#7c9ec8" stroke-width="1.6"/><rect x="4.5" y="8" width="5" height="3" fill="#4a5868"/><rect x="4.5" y="19.5" width="5" height="3" fill="#4a5868"/><rect x="12.3" y="4.8" width="13.8" height="9" rx="2" fill="#fff" stroke="#7c9ec8" stroke-width="1.6"/><rect x="12.3" y="16.5" width="13.8" height="9" rx="2" fill="#fff" stroke="#7c9ec8" stroke-width="1.6"/></svg>
<div class="t" style="left:50.40px;top:448.00px;font-size:15.6px;color:#000;font-weight:400;z-index:61;transform:scaleX(0.9635);transform-origin:0 0;">Attributes Form</div>
<div class="b" style="left:242px;top:231px;width:194px;height:30px;z-index:60;border:3px solid #ff0000;background:#f0f0f0;border-radius:4px;"></div>
<div class="t" style="left:250.80px;top:242.00px;font-size:10.6px;color:#505050;font-weight:700;z-index:61;transform:scaleX(1.0238);transform-origin:0 0;">abc</div>
<div class="t" style="left:278.20px;top:241.00px;font-size:14.9px;color:#000;font-weight:400;z-index:61;transform:scaleX(1.0287);transform-origin:0 0;">local-file-default-value</div>
<div class="b" style="left:766px;top:215px;width:83px;height:33px;z-index:60;border:3px solid #ff0000;background:#f0f0f0;border-radius:6px;"></div>
<div class="b" style="left:773px;top:223px;width:17px;height:18px;z-index:61;background:#fff;border:1px solid #c2c2c2;border-radius:2px;"></div>
<div class="t" style="left:796.40px;top:228.00px;font-size:12.3px;color:#000;font-weight:400;z-index:61;transform:scaleX(0.9763);transform-origin:0 0;">Editable</div>
<div class="b" style="left:755px;top:290px;width:715px;height:167px;z-index:60;border:3px solid #ff0000;background:#f0f0f0;border-radius:3px;"></div>
<div class="b" style="left:759px;top:295px;width:707px;height:159px;z-index:61;border:1px solid #d6d6d6;background:#ececec;border-radius:2px;"></div>
<div class="b" style="left:773px;top:306px;width:677px;height:27px;z-index:62;background:linear-gradient(#fdfdfd,#f0f0f0);border:1px solid #b4b4b4;border-radius:3px;"></div>
<div class="t" style="left:779.40px;top:314.00px;font-size:12.3px;color:#000;font-weight:400;z-index:63;transform:scaleX(1.0239);transform-origin:0 0;">Text Edit</div>
<svg class="b" style="left:1430.5px;top:317px;z-index:63;" width="10" height="7" viewBox="0 0 10 7"><path d="M0.5 0.5 L9.5 0.5 L5 6 Z" fill="#3a3a3a"/></svg>
<div class="b" style="left:785px;top:352px;width:17px;height:17px;z-index:62;background:#fff;border:1px solid #c2c2c2;border-radius:2px;"></div>
<svg class="b" style="left:785px;top:352px;z-index:63;" width="17" height="17" viewBox="0 0 17 17"><path d="M4 8.5 L7.2 13 L13 3.2" stroke="#000" stroke-width="2.3" fill="none"/></svg>
<div class="t" style="left:809.80px;top:356.00px;font-size:13.3px;color:#000;font-weight:700;z-index:62;transform:scaleX(1.0144);transform-origin:0 0;">Multiline</div>
<div class="b" style="left:785px;top:375px;width:654px;height:52px;z-index:62;border:1px solid #d2d2d2;background:#e8e8e8;border-radius:2px;"></div>
<div class="b" style="left:799px;top:391px;width:17px;height:17px;z-index:63;background:#fff;border:1px solid #c2c2c2;border-radius:2px;"></div>
<svg class="b" style="left:799px;top:391px;z-index:64;" width="17" height="17" viewBox="0 0 17 17"><path d="M4 8.5 L7.2 13 L13 3.2" stroke="#000" stroke-width="2.3" fill="none"/></svg>
<div class="t" style="left:822.90px;top:395.00px;font-size:12.3px;color:#000;font-weight:400;z-index:63;transform:scaleX(0.9378);transform-origin:0 0;">HTML</div>
<div class="b" style="left:755px;top:694px;width:715px;height:114px;z-index:60;border:3px solid #ff0000;background:#f0f0f0;border-radius:3px;"></div>
<div class="b" style="left:759px;top:698px;width:707px;height:107px;z-index:61;border:1px solid #d6d6d6;background:#ececec;border-radius:2px;"></div>
<div class="t" style="left:773.00px;top:719.00px;font-size:12.3px;color:#000;font-weight:400;z-index:62;transform:scaleX(0.9989);transform-origin:0 0;">Default value</div>
<div class="b" style="left:854px;top:710px;width:558px;height:28px;z-index:62;background:#fff;border:1px solid #b4b4b4;border-radius:3px;"></div>
<div class="t" style="left:857.40px;top:720.00px;font-size:12.3px;color:#000;font-weight:400;z-index:63;transform:scaleX(1.0737);transform-origin:0 0;">'&lt;a href="project://my-pdf.pdf"&gt;Open File&lt;/a&gt;'</div>
<svg class="b" style="left:1384px;top:716px;z-index:63;" width="18" height="14" viewBox="0 0 18 14"><path d="M1 7 L6 1 L17 1 L17 13 L6 13 Z" fill="#a4a4a4"/><path d="M8.5 4 L14 10 M14 4 L8.5 10" stroke="#fff" stroke-width="1.8"/></svg>
<div class="b" style="left:1420px;top:710px;width:30px;height:28px;z-index:62;background:linear-gradient(#fbfbfb,#eeeeee);border:1px solid #a8a8a8;border-radius:3px;"></div>
<svg class="b" style="left:1425px;top:712px;z-index:63;" width="21" height="21" viewBox="0 0 21 21"><g transform="scale(1.0)"><g fill="none" stroke="#5a2a6a" stroke-linecap="round"><path d="M13.6 6 C12.8 4.2 11 3.6 9.5 3.7 C7 3.9 5.3 5.6 5.4 7.6 C5.5 9.3 6.8 10.3 8.5 10.4" stroke-width="1.25"/><path d="M7.8 4.5 C5.9 5.6 5.4 8.2 6.9 9.6" stroke-width="1.8"/><path d="M8 10.4 L12.3 10.4" stroke-width="1.15"/><path d="M8.5 10.4 C5.8 10.7 3.9 12.4 4 14.5 C4.1 16.6 6.3 17.7 9 17.7 C11.5 17.7 13.4 16.4 14.7 14.4" stroke-width="1.25"/><path d="M6.6 11.1 C4.3 12.3 4 15.8 6.8 17" stroke-width="2.0"/><path d="M12.4 16.7 C13.4 16 14.2 15.2 14.8 14.3" stroke-width="1.9"/></g><circle cx="13.3" cy="5.8" r="1.25" fill="#5a2a6a"/></g></svg>
<div class="t" style="left:773.00px;top:748.00px;font-size:12.3px;color:#000;font-weight:400;z-index:62;transform:scaleX(0.9623);transform-origin:0 0;">Preview</div>
<div class="t" style="left:854.70px;top:748.00px;font-size:12.3px;color:#0000ee;font-weight:400;z-index:62;font-style:italic;text-decoration:underline;transform:scaleX(0.9770);transform-origin:0 0;">Open File</div>
<div class="b" style="left:773px;top:772px;width:17px;height:17px;z-index:62;background:#fff;border:1px solid #c2c2c2;border-radius:2px;"></div>
<div class="t" style="left:796.00px;top:776.00px;font-size:12.3px;color:#000;font-weight:400;z-index:62;transform:scaleX(1.0170);transform-origin:0 0;">Apply default value on update</div>
</body></html>
